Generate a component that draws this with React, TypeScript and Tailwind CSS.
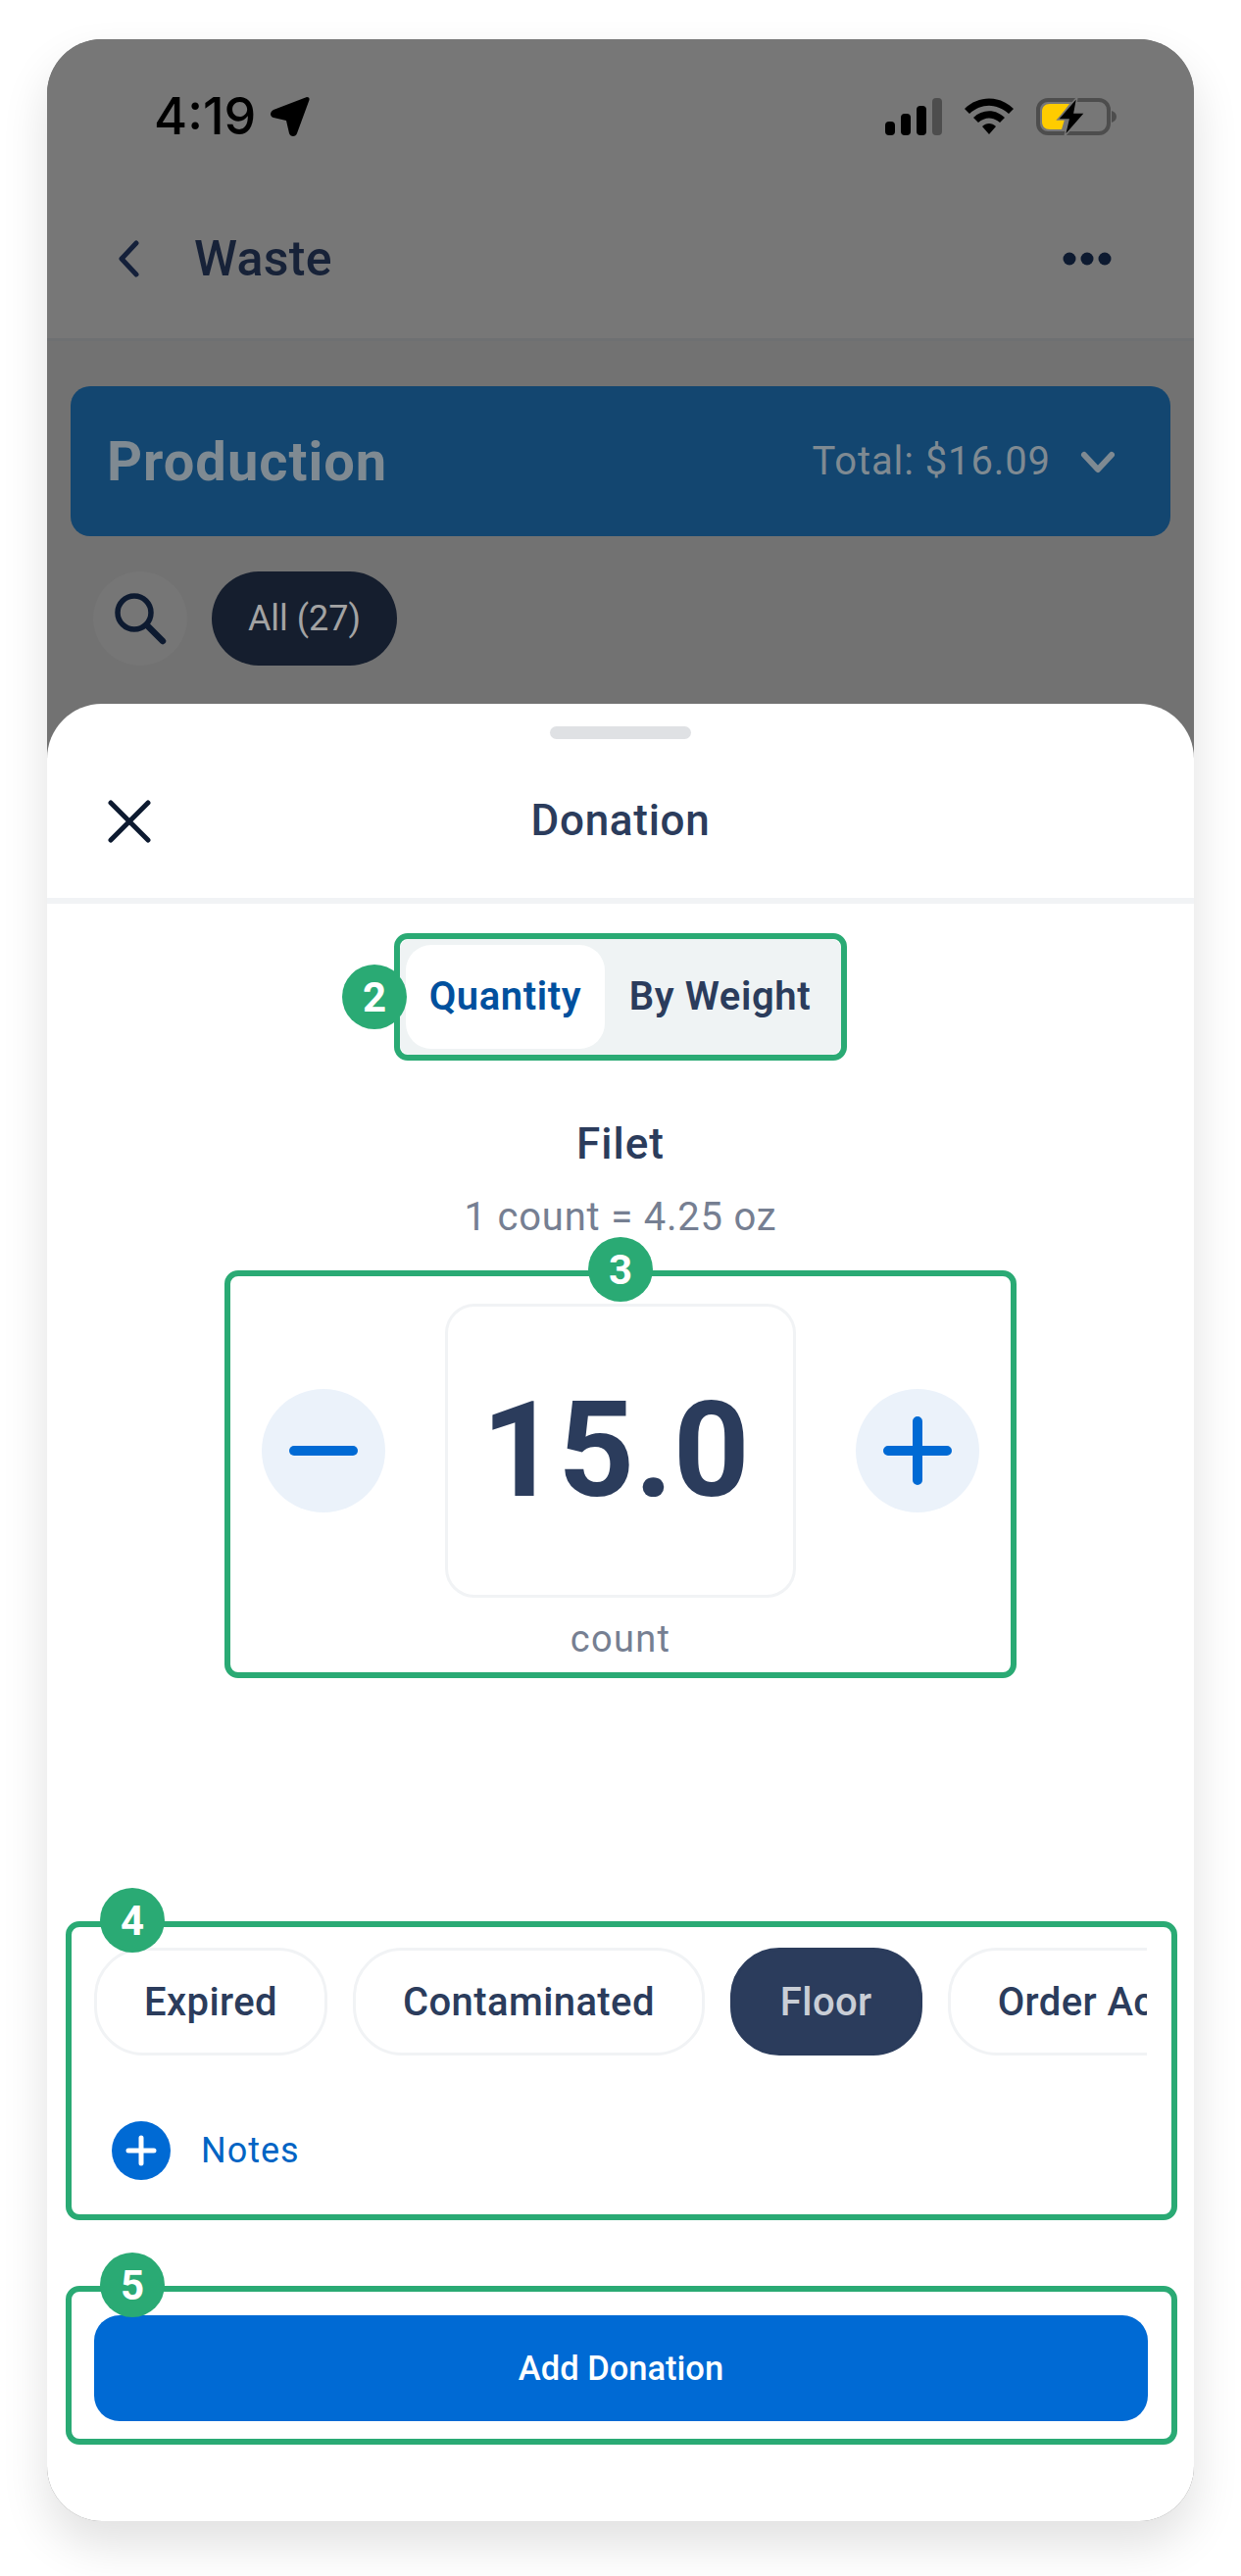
const reasons = ["Expired", "Contaminated", "Floor", "Order Accuracy"];

function Badge({ n, className }: { n: number; className: string }) {
  return (
    <span className={`absolute z-10 flex h-[66px] w-[66px] items-center justify-center rounded-full bg-[#2aaa74] text-[42px] font-bold text-white ${className}`}>
      {n}
    </span>
  );
}

function StatusIcons() {
  return (
    <div className="flex items-center">
      <svg width="58" height="38" viewBox="0 0 58 38" fill="#000">
        <rect x="0" y="24" width="10" height="14" rx="4" />
        <rect x="16" y="16" width="10" height="22" rx="4" />
        <rect x="32" y="8" width="10" height="30" rx="4" />
        <rect x="48" y="0" width="10" height="38" rx="4" fill="#4d4d4d" />
      </svg>
      <svg className="ml-[23px]" width="50" height="38" viewBox="0 0 50 38" fill="#000">
        <path d="M0 11 C14 -3 36 -3 50 11 L45 16 C33 5 17 5 5 16 Z" />
        <path d="M9 20 C18 11 32 11 41 20 L36 25 C29 19 21 19 14 25 Z" />
        <path d="M18 29 C22 25 28 25 32 29 L25 37 Z" />
      </svg>
      <svg className="ml-[23px]" width="82" height="42" viewBox="0 0 82 42">
        <rect x="2" y="4" width="72" height="34" rx="10" fill="none" stroke="#4d4d4d" strokeWidth="4" />
        <path d="M14 8 H34 L22 24 H29 L26 34 H14 C9 34 6 31 6 26 V16 C6 11 9 8 14 8 Z" fill="#ffcc00" />
        <path d="M42 1 L22 24 H33 L29 41 L50 17 H39 Z" fill="#000" stroke="#777" strokeWidth="1.5" />
        <path d="M77 15 C80 16 82 18 82 21 C82 24 80 26 77 27 Z" fill="#4d4d4d" />
      </svg>
    </div>
  );
}

export default function App() {
  return (
    <div className="h-[2628px] w-[1266px] bg-white px-[48px] pt-[40px] font-['Roboto',sans-serif]">
      <div className="flex h-[2532px] w-[1170px] flex-col overflow-hidden rounded-[56px] bg-[#727272] shadow-[0_24px_48px_rgba(0,0,0,0.12)]">
        {/* Dimmed screen behind the sheet */}
        <div className="h-[678px] shrink-0">
          <div className="h-[308px] border-b-[3px] border-[#6e7072] bg-[#777777]">
            <div className="flex items-center justify-between pl-[109px] pr-[79px] pt-[56px]">
              <div className="flex items-center">
                <span className="font-['Inter',sans-serif] text-[52px] leading-[46px] font-medium text-black">4:19</span>
                <svg className="ml-[14px]" width="42" height="42" viewBox="0 0 42 42" fill="#000">
                  <path d="M38 1 C40 1 41 2 40.500 4 L28 38 C27 42 21 42 20 38 L17 25 L4 22 C0 21 0 16 4 14 Z" />
                </svg>
              </div>
              <StatusIcons />
            </div>
            <div className="mt-[92px] flex items-center justify-between pl-[71px] pr-[84px]">
              <div className="flex items-center">
                <svg width="24" height="40" viewBox="0 0 24 40" fill="none" stroke="#14203a" strokeWidth="5" strokeLinecap="round" strokeLinejoin="round">
                  <path d="M20 4 L5 20 L20 36" />
                </svg>
                <span className="ml-[55px] text-[50px] leading-[60px] font-medium tracking-[0.3px] text-[#172238]">Waste</span>
              </div>
              <svg width="50" height="14" viewBox="0 0 50 14" fill="#0d1a30">
                <circle cx="7" cy="7" r="6.500" />
                <circle cx="25" cy="7" r="6.500" />
                <circle cx="43" cy="7" r="6.500" />
              </svg>
            </div>
          </div>
          <div className="px-[24px] pt-[46px]">
            <div className="flex h-[153px] items-center justify-between rounded-[20px] bg-[#134670] pl-[37px] pr-[56px]">
              <span className="text-[56px] font-bold tracking-[1px] text-[#7f8a92]">Production</span>
              <div className="flex items-center">
                <span className="text-[40px] tracking-[0.9px] text-[#7f8a92]">Total: $16.09</span>
                <svg className="ml-[30px]" width="36" height="24" viewBox="0 0 36 24" fill="none" stroke="#7f8a92" strokeWidth="6" strokeLinecap="round" strokeLinejoin="round">
                  <path d="M4 5 L18 20 L32 5" />
                </svg>
              </div>
            </div>
            <div className="mt-[36px] flex items-center pl-[23px]">
              <div className="flex h-[96px] w-[96px] items-center justify-center rounded-full bg-[#767676]">
                <svg width="56" height="56" viewBox="0 0 56 56" fill="none" stroke="#0d1a30" strokeLinecap="round">
                  <circle cx="22" cy="22" r="17" strokeWidth="5.500" />
                  <path d="M35 35 L51 51" strokeWidth="6.500" />
                </svg>
              </div>
              <div className="ml-[25px] flex h-[96px] w-[189px] items-center justify-center rounded-full bg-[#151e2e] text-[36px] text-[#a3a3a3]">
                All (27)
              </div>
            </div>
          </div>
        </div>

        {/* Bottom sheet */}
        <div className="flex flex-1 flex-col items-center rounded-t-[56px] bg-white pt-[23px]">
          <div className="h-[13px] w-[144px] rounded-full bg-[#dfe1e4]" />
          <div className="relative flex h-[168px] w-full shrink-0 items-center justify-center border-b-[6px] border-[#f1f3f5] pt-[4px]">
            <svg className="absolute left-[62px] top-[62px]" width="44" height="44" viewBox="0 0 44 44" fill="none" stroke="#0d1a30" strokeWidth="5" strokeLinecap="round">
              <path d="M3 3 L41 41 M41 3 L3 41" />
            </svg>
            <span className="text-[44px] font-medium tracking-[0.7px] text-[#2b3c5c]">Donation</span>
          </div>

          <div className="relative mt-[30px] h-[130px] w-[462px] shrink-0 rounded-[14px] border-[6px] border-[#2aaa74]">
            <Badge n={2} className="left-[-59px] top-1/2 -translate-y-1/2" />
            <div className="flex h-full items-stretch rounded-[10px] bg-[#eff3f4] p-[6px]">
              <div className="flex w-[203px] items-center justify-center rounded-[26px] bg-white text-[40px] font-semibold tracking-[0.6px] text-[#00509e]">Quantity</div>
              <div className="flex flex-1 items-center justify-center text-[40px] font-semibold tracking-[0.6px] text-[#2b3c5c]">By Weight</div>
            </div>
          </div>

          <div className="mt-[59px] h-[52px] text-[44px] leading-[52px] font-medium tracking-[1px] text-[#2b3c5c]">Filet</div>
          <div className="mt-[25px] h-[47px] text-[40px] leading-[48px] tracking-[0.8px] text-[#767f92]">1 count = 4.25 oz</div>

          <div className="relative mt-[31px] flex h-[416px] w-[808px] shrink-0 flex-col items-center rounded-[14px] border-[6px] border-[#2aaa74] pt-[28px]">
            <Badge n={3} className="left-1/2 top-[-40px] -translate-x-1/2" />
            <div className="flex items-center gap-[61px]">
              <div className="flex h-[126px] w-[126px] items-center justify-center rounded-full bg-[#ebf2fa]">
                <div className="h-[10px] w-[70px] rounded-full bg-[#006ad4]" />
              </div>
              <div className="flex h-[300px] w-[358px] items-center justify-center rounded-[30px] border-[3px] border-[#f1f3f5] pr-[10px] text-[136px] font-bold text-[#2b3c5c]">
                15.0
              </div>
              <div className="flex h-[126px] w-[126px] items-center justify-center rounded-full bg-[#ebf2fa]">
                <svg width="70" height="70" viewBox="0 0 70 70" fill="none" stroke="#006ad4" strokeWidth="10" strokeLinecap="round">
                  <path d="M5 35 H65 M35 5 V65" />
                </svg>
              </div>
            </div>
            <div className="mt-[18px] h-[48px] text-[38px] leading-[48px] tracking-[1.300px] text-[#767f92]">count</div>
          </div>

          <div className="relative ml-[19px] mr-[17px] mt-[248px] h-[305px] shrink-0 self-stretch rounded-[14px] border-[6px] border-[#2aaa74] pl-[23px] pr-[25px] pt-[21px]">
            <Badge n={4} className="left-[29px] top-[-40px]" />
            <div className="flex gap-[26px] overflow-hidden">
              {reasons.map((reason) => (
                <div
                  key={reason}
                  className={`flex h-[110px] shrink-0 items-center rounded-[50px] border-[3px] px-[48px] pt-[2px] text-[40px] font-medium tracking-[0.4px] ${
                    reason === "Floor" ? "border-[#2b3c5c] bg-[#2b3c5c] text-[#c9ced6]" : "border-[#f1f3f5] text-[#2b3c5c]"
                  }`}
                >
                  {reason}
                </div>
              ))}
            </div>
            <div className="ml-[18px] mt-[67px] flex items-center">
              <div className="flex h-[60px] w-[60px] items-center justify-center rounded-full bg-[#006ad4]">
                <svg width="32" height="32" viewBox="0 0 32 32" fill="none" stroke="#fff" strokeWidth="5" strokeLinecap="round">
                  <path d="M3 16 H29 M16 3 V29" />
                </svg>
              </div>
              <span className="ml-[31px] text-[36px] tracking-[1px] text-[#0064c4]">Notes</span>
            </div>
          </div>

          <div className="relative ml-[19px] mr-[17px] mt-[67px] h-[162px] shrink-0 self-stretch rounded-[14px] border-[6px] border-[#2aaa74] pl-[23px] pr-[24px] pt-[24px]">
            <Badge n={5} className="left-[29px] top-[-40px]" />
            <div className="flex h-[108px] items-center justify-center rounded-[26px] bg-[#006ad4] pt-[2px] text-[34.500px] font-medium text-white">
              Add Donation
            </div>
          </div>
        </div>
      </div>
    </div>
  );
}
